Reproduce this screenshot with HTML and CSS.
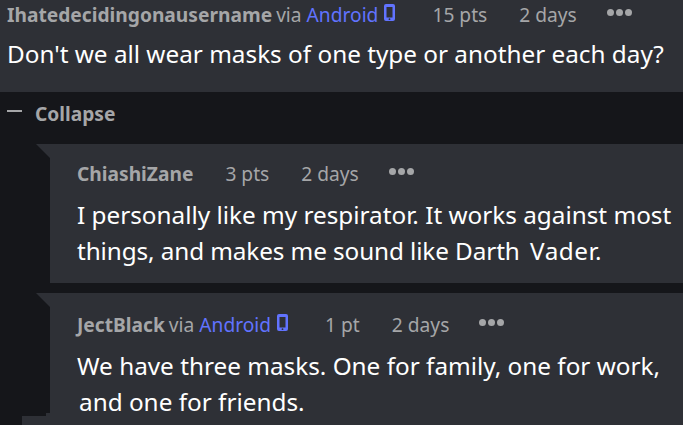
FILE: index.html
```html
<!DOCTYPE html>
<html>
<head>
    <title>Comment thread</title>
    <link rel="stylesheet" href="styles.css">
</head>
<body>
    <div class="comment top-comment">
        <div class="meta">
            <span class="author">Ihatedecidingonausername</span>
            <span class="via">via</span>
            <span class="client">Android</span>
            <svg class="phone" viewBox="0 0 11 17"><path fill-rule="evenodd" d="M2 0h7a2 2 0 0 1 2 2v13a2 2 0 0 1-2 2H2a2 2 0 0 1-2-2V2a2 2 0 0 1 2-2zM2.5 3v10.5h6V3zM5.5 14.3a.9.9 0 1 0 0 1.8.9.9 0 0 0 0-1.8z"/></svg>
            <span class="stat pts-gap">15 pts</span>
            <span class="stat age-gap">2 days</span>
            <span class="dots"><i></i><i></i><i></i></span>
        </div>
        <p class="body">Don't we all wear masks of one type or another each day?</p>
    </div>

    <div class="collapse-row">
        <span class="minus"></span>
        <span class="collapse-label">Collapse</span>
    </div>

    <div class="reply">
        <div class="comment">
            <div class="meta">
                <span class="author">ChiashiZane</span>
                <span class="stat pts-gap">3 pts</span>
                <span class="stat age-gap">2 days</span>
                <span class="dots"><i></i><i></i><i></i></span>
            </div>
            <p class="body">I personally like my respirator. It works against most <span class="tight">things, and makes me sound like Darth</span> <span class="wide">Vader.</span></p>
        </div>
    </div>

    <div class="reply reply-last">
        <div class="comment">
            <div class="meta">
                <span class="author">JectBlack</span>
                <span class="via">via</span>
                <span class="client">Android</span>
                <svg class="phone" viewBox="0 0 11 17"><path fill-rule="evenodd" d="M2 0h7a2 2 0 0 1 2 2v13a2 2 0 0 1-2 2H2a2 2 0 0 1-2-2V2a2 2 0 0 1 2-2zM2.5 3v10.5h6V3zM5.5 14.3a.9.9 0 1 0 0 1.8.9.9 0 0 0 0-1.8z"/></svg>
                <span class="stat pts-gap">1 pt</span>
                <span class="stat age-gap">2 days</span>
                <span class="dots"><i></i><i></i><i></i></span>
            </div>
            <p class="body">We have three masks. One for family, one for work, <span class="nudge">and</span> one for friends.</p>
        </div>
    </div>
</body>
</html>
```

FILE: styles.css
```css
html, body {
    margin: 0;
    height: 425px;
    overflow: hidden;
}

body {
    background: #15161a;
    font-family: "Noto Sans", sans-serif;
    color: #fff;
}

.comment {
    background: #2e3036;
}

.top-comment {
    height: 92px;
    padding-left: 7px;
    box-sizing: border-box;
}

.meta {
    display: flex;
    align-items: center;
    height: 28px;
    font-size: 19.2px;
    color: #a5a6a8;
    white-space: nowrap;
}

.author {
    font-weight: 700;
}

.via {
    margin-left: 4px;
}

.client {
    margin-left: 5px;
    color: #6173ff;
}

.phone {
    width: 11px;
    height: 17px;
    margin-left: 6px;
    margin-right: 5px;
    margin-top: -4px;
    fill: #6173ff;
}

.pts-gap {
    margin-left: 32px;
}

.age-gap {
    margin-left: 32px;
}

.dots {
    display: flex;
    gap: 2px;
    margin-left: 30px;
    margin-top: -3px;
}

.dots i {
    width: 7px;
    height: 7px;
    border-radius: 50%;
    background: #a5a6a8;
}

.body {
    margin: 8px 0 0;
    font-size: 24.3px;
    line-height: 36px;
}

.collapse-row {
    display: flex;
    align-items: center;
    height: 42px;
    margin-bottom: 10px;
    padding-left: 7px;
}

.minus {
    width: 15px;
    height: 2px;
    margin-top: -5px;
    background: #a5a6a8;
}

.collapse-label {
    margin-left: 13px;
    font-size: 19.2px;
    font-weight: 700;
    color: #a5a6a8;
}

.reply {
    position: relative;
    margin-left: 50px;
    margin-bottom: 10px;
}

/* little fold at the top left of each reply */
.reply::before {
    content: "";
    position: absolute;
    left: -14px;
    top: 0;
    border-top: 14px solid #2e3036;
    border-left: 14px solid transparent;
}

.reply .comment {
    height: 139px;
    padding: 15px 0 0 27px;
    box-sizing: border-box;
}

.reply .body {
    margin-top: 10px;
}

.reply-last .comment {
    padding-top: 17px;
}

.nudge {
    margin-left: 2px;
}

.tight {
    letter-spacing: -0.1px;
}

.wide {
    margin-left: 4px;
    letter-spacing: 0.5px;
}

/* start of the next reply showing at the bottom edge */
.reply-last::after {
    content: "";
    position: absolute;
    left: -28px;
    top: 120px;
    width: 28px;
    height: 12px;
    background:
        linear-gradient(#2e3036, #2e3036) right top / 4px 3px no-repeat,
        linear-gradient(#2e3036, #2e3036) left bottom / 100% 9px no-repeat;
}
```
